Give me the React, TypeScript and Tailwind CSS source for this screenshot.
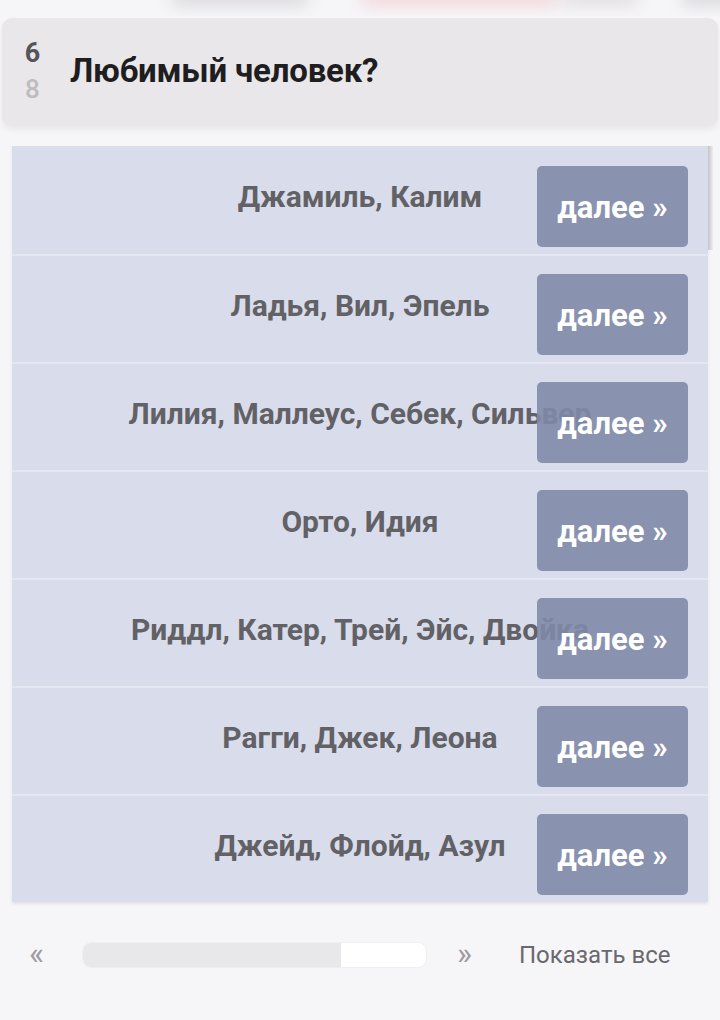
import React from "react";

const rows = [
  "Джамиль, Калим",
  "Ладья, Вил, Эпель",
  "Лилия, Маллеус, Себек, Сильвер",
  "Орто, Идия",
  "Риддл, Катер, Трей, Эйс, Двойка",
  "Рагги, Джек, Леона",
  "Джейд, Флойд, Азул",
];

export default function App() {
  return (
    <div
      className="relative w-[720px] h-[1020px] overflow-hidden bg-[#f6f5f8]"
      style={{ fontFamily: "Roboto, 'Noto Sans', sans-serif" }}
    >
      {/* blurred remains of content above */}
      <div className="absolute left-0 top-0 w-full h-[16px] overflow-hidden opacity-60">
        <div className="absolute left-[170px] -top-[12px] w-[140px] h-[18px] rounded-full bg-[#c9c7cc] blur-[8px]" />
        <div className="absolute left-[360px] -top-[12px] w-[200px] h-[18px] rounded-full bg-[#f0c4c8] blur-[8px]" />
        <div className="absolute left-[560px] -top-[12px] w-[80px] h-[18px] rounded-full bg-[#d6d0d4] blur-[8px]" />
        <div className="absolute left-[680px] -top-[12px] w-[60px] h-[18px] rounded-full bg-[#c9c7cc] blur-[8px]" />
      </div>

      <div className="pt-[18px] px-[2px]">
        <div className="flex items-center h-[108px] rounded-[10px] bg-[#e9e7ea] shadow-[0_4px_6px_rgba(0,0,0,0.06)]">
          <div className="flex flex-col items-center w-[60px] pl-[1px] -mt-[2px]">
            <span className="text-[27px] leading-[36px] font-bold text-[#555558]">6</span>
            <span className="text-[26px] leading-[36px] font-medium text-[#bdbcc0]">8</span>
          </div>
          <h1 className="ml-[8px] -mt-[2px] text-[33px] font-bold text-[#1e1e21] tracking-[-0.2px]">
            Любимый человек?
          </h1>
        </div>
      </div>

      <div className="relative mt-[20px] mx-[12px] bg-[#d9ddeb] shadow-[0_2px_3px_rgba(0,0,0,0.08)]">
        <div className="absolute -right-[5px] top-0 w-[5px] h-[104px] bg-gradient-to-r from-[#c4c4c8] to-[#eeeef1]" />
        {rows.map((name, i) => (
          <div
            key={i}
            className={`relative flex items-center justify-center h-[108px] ${
              i > 0 ? "border-t-2 border-[#e4e7f1]" : ""
            }`}
          >
            <span className="text-[30px] font-bold text-[#616166] whitespace-nowrap -mt-[8px]">
              {name}
            </span>
            <div
              className={`absolute right-[20px] ${
                i > 0 ? "top-[18px]" : "top-[20px]"
              } w-[151px] h-[81px] rounded-[5px] bg-[#7f8aa7]/90 flex items-center justify-center`}
            >
              <span className="mt-[3px] text-[31px] font-bold text-white whitespace-nowrap">
                далее »
              </span>
            </div>
          </div>
        ))}
      </div>

      <div className="flex items-center h-[106px]">
        <span className="ml-[29px] w-[20px] text-[32px] text-[#9c9ba0] leading-none -mt-[4px]">«</span>
        <div className="ml-[33px] flex w-[345px] h-[26px] rounded-[9px] overflow-hidden border border-[#efeef2] bg-white">
          <div className="w-[258px] h-full bg-[#e8e7ea]" />
        </div>
        <span className="ml-[30px] w-[20px] text-[32px] text-[#9c9ba0] leading-none -mt-[4px]">»</span>
        <span className="ml-[42px] text-[24px] text-[#69686d]">Показать все</span>
      </div>
    </div>
  );
}
